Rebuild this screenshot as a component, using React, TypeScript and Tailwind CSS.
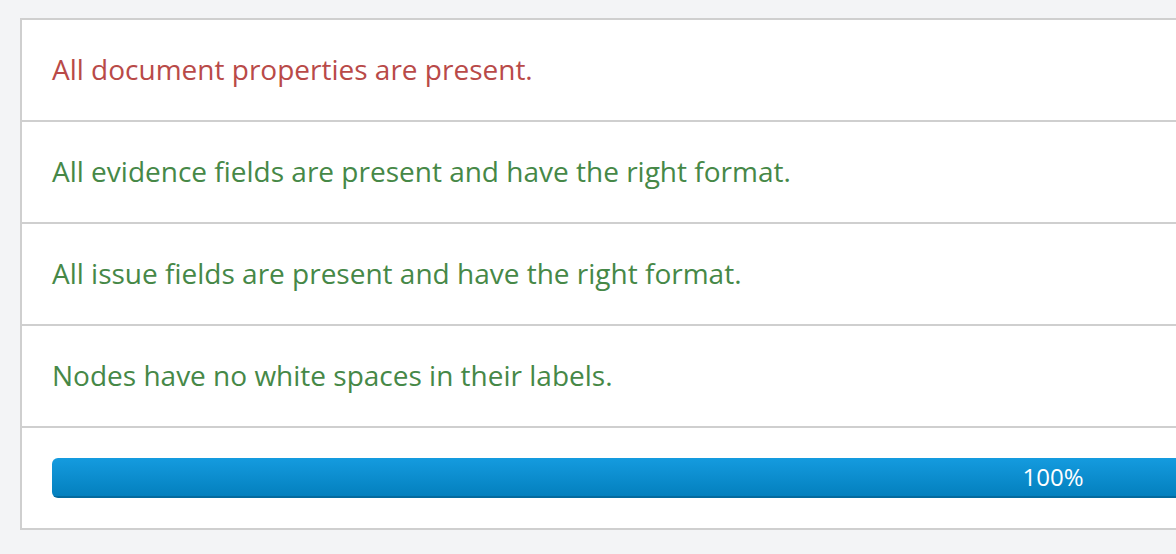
import React from 'react';

type Check = { label: string; ok: boolean };

const checks: Check[] = [
  { label: 'All document properties are present.', ok: false },
  { label: 'All evidence fields are present and have the right format.', ok: true },
  { label: 'All issue fields are present and have the right format.', ok: true },
  { label: 'Nodes have no white spaces in their labels.', ok: true },
];

export default function App() {
  const pct = 100;
  return (
    <div
      className="h-[554px] w-[1176px] overflow-hidden bg-[#f3f4f6] pl-5 pt-[18px]"
      style={{ fontFamily: '"Open Sans", "Noto Sans", sans-serif' }}
    >
      <div className="w-[2066px] border-2 border-[#cfcfcf] bg-white">
        {checks.map((c) => (
          <div
            key={c.label}
            className="flex h-[102px] items-center border-b-2 border-[#cfcfcf] px-[30px] pb-[3px]"
          >
            <span className={`text-[28px] ${c.ok ? 'text-[#468847]' : 'text-[#b94a48]'}`}>
              {c.label}
            </span>
          </div>
        ))}
        <div className="flex h-[100px] items-center px-[30px]">
          <div className="h-10 w-full overflow-hidden rounded-md bg-[#f2f2f2]">
            <div
              className="flex h-full items-center justify-center border-b-2 border-[#046a9e] bg-gradient-to-b from-[#149bdf] to-[#0480be] text-[24px] text-white"
              style={{ width: pct + '%' }}
            >
              {pct}%
            </div>
          </div>
        </div>
      </div>
    </div>
  );
}
